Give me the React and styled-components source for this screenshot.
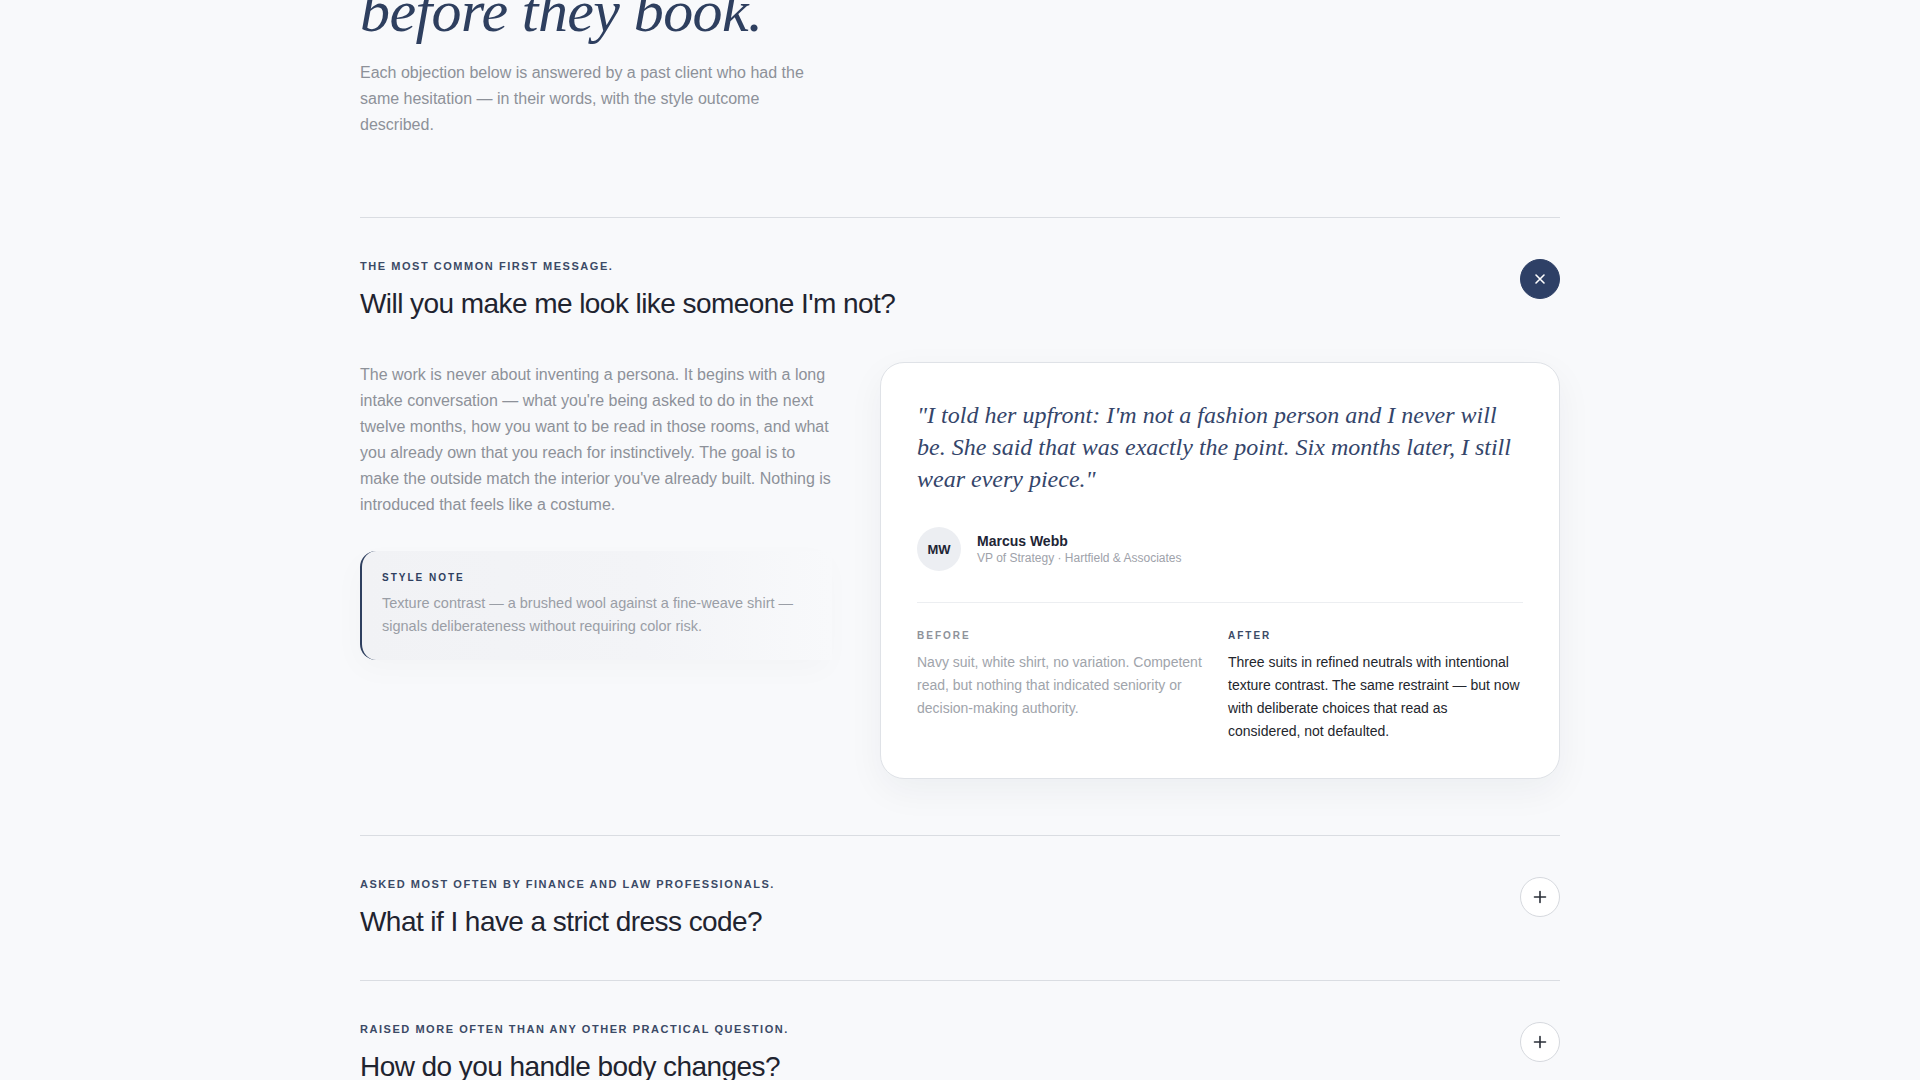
import React, { useState } from 'react'
import styled, { createGlobalStyle } from 'styled-components'

const GlobalStyle = createGlobalStyle`
  html, body {
    margin: 0;
    padding: 0;
    background: #f8f9fb;
  }
  body {
    font-family: "Liberation Sans", Arial, sans-serif;
    -webkit-font-smoothing: antialiased;
  }
`

const Page = styled.div`
  width: 1200px;
  margin: 0 auto;
  padding-bottom: 80px;
`

const Intro = styled.header`
  margin-top: -22px;
  margin-bottom: 79px;
`

const Heading = styled.h1`
  margin: 0 0 16px;
  font-family: "Liberation Serif", "Times New Roman", serif;
  font-style: italic;
  font-weight: 400;
  font-size: 60px;
  line-height: 1.1;
  letter-spacing: -0.01em;
  color: #2e3f5f;
`

const Lede = styled.p`
  margin: 0;
  max-width: 460px;
  font-size: 16px;
  line-height: 26px;
  color: #8d9199;
`

const Item = styled.section`
  border-top: 1px solid #dadde2;
  padding: 40px 0 ${({ open }) => (open ? '56px' : '40px')};
`

const ItemHead = styled.div`
  display: flex;
  align-items: flex-start;
  justify-content: space-between;
  cursor: pointer;
`

const Eyebrow = styled.div`
  font-size: 11px;
  line-height: 16px;
  font-weight: 700;
  letter-spacing: 0.14em;
  text-transform: uppercase;
  color: #3b4a66;
  margin-bottom: 12px;
`

const Question = styled.h2`
  margin: 0;
  font-size: 28px;
  line-height: 36px;
  font-weight: 400;
  letter-spacing: -0.02em;
  color: #1f2430;
`

const Toggle = styled.button`
  flex: none;
  width: 40px;
  height: 40px;
  margin-top: 1px;
  border-radius: 50%;
  display: flex;
  align-items: center;
  justify-content: center;
  padding: 0;
  cursor: pointer;
  border: 1px solid ${({ open }) => (open ? '#2e4066' : '#d6d9de')};
  background: ${({ open }) => (open ? '#2e4066' : '#ffffff')};
  color: ${({ open }) => (open ? '#ffffff' : '#2a2f38')};
`

const Body = styled.div`
  display: grid;
  grid-template-columns: 472px 1fr;
  column-gap: 48px;
  margin-top: 40px;
  align-items: start;
`

const Answer = styled.p`
  margin: 0 0 33px;
  font-size: 16px;
  line-height: 26px;
  color: #8d9199;
`

const Note = styled.aside`
  border-left: 2px solid #2e3f5f;
  border-radius: 16px 0 0 16px;
  padding: 20px 24px 22px 20px;
  background: linear-gradient(90deg, #f1f2f5 0%, #f3f4f7 60%, rgba(244, 245, 248, 0) 100%);
  box-shadow: -4px 10px 30px rgba(30, 40, 60, 0.025);
`

const NoteLabel = styled.div`
  font-size: 10px;
  line-height: 14px;
  font-weight: 700;
  letter-spacing: 0.2em;
  color: #2e3f5f;
  margin-bottom: 7px;
`

const NoteText = styled.p`
  margin: 0;
  font-size: 14.5px;
  line-height: 23px;
  color: #9a9ea6;
`

const Card = styled.div`
  background: #ffffff;
  border: 1px solid #dfe2e7;
  border-radius: 24px;
  padding: 36px 36px 35px;
  box-shadow: 0 12px 36px rgba(25, 35, 55, 0.05);
`

const Quote = styled.blockquote`
  margin: 0 0 32px;
  font-family: "Liberation Serif", "Times New Roman", serif;
  font-style: italic;
  font-size: 24px;
  line-height: 32px;
  color: #34456a;
`

const Author = styled.div`
  display: flex;
  align-items: center;
  gap: 16px;
  padding-bottom: 31px;
  border-bottom: 1px solid #eceef1;
`

const Avatar = styled.div`
  width: 44px;
  height: 44px;
  border-radius: 50%;
  background: #eceef2;
  display: flex;
  align-items: center;
  justify-content: center;
  font-size: 13px;
  font-weight: 700;
  color: #1e2535;
`

const Name = styled.div`
  font-size: 14px;
  line-height: 18px;
  font-weight: 700;
  color: #1e2535;
`

const Role = styled.div`
  font-size: 12px;
  line-height: 17px;
  color: #9ea2aa;
`

const Compare = styled.div`
  display: grid;
  grid-template-columns: 1fr 1fr;
  column-gap: 16px;
  padding-top: 26px;
`

const CompareLabel = styled.div`
  font-size: 10px;
  line-height: 14px;
  font-weight: 700;
  letter-spacing: 0.2em;
  color: ${({ after }) => (after ? '#3b4a66' : '#8e929a')};
  margin-bottom: 8px;
`

const CompareText = styled.p`
  margin: 0;
  font-size: 14px;
  line-height: 23px;
  color: ${({ after }) => (after ? '#23262d' : '#a0a4ab')};
`

const CloseIcon = () => (
  <svg width="12" height="12" viewBox="0 0 12 12" fill="none">
    <path d="M2 2l8 8M10 2l-8 8" stroke="currentColor" strokeWidth="1.6" strokeLinecap="round" />
  </svg>
)

const PlusIcon = () => (
  <svg width="14" height="14" viewBox="0 0 14 14" fill="none">
    <path d="M7 1.5v11M1.5 7h11" stroke="currentColor" strokeWidth="1.6" strokeLinecap="round" />
  </svg>
)

const objections = [
  {
    id: 'persona',
    eyebrow: 'The most common first message.',
    question: "Will you make me look like someone I'm not?",
    answer:
      "The work is never about inventing a persona. It begins with a long intake conversation — what you're being asked to do in the next twelve months, how you want to be read in those rooms, and what you already own that you reach for instinctively. The goal is to make the outside match the interior you've already built. Nothing is introduced that feels like a costume.",
    note: 'Texture contrast — a brushed wool against a fine-weave shirt — signals deliberateness without requiring color risk.',
    quote:
      "\"I told her upfront: I'm not a fashion person and I never will be. She said that was exactly the point. Six months later, I still wear every piece.\"",
    initials: 'MW',
    name: 'Marcus Webb',
    role: 'VP of Strategy · Hartfield & Associates',
    before:
      'Navy suit, white shirt, no variation. Competent read, but nothing that indicated seniority or decision-making authority.',
    after:
      'Three suits in refined neutrals with intentional texture contrast. The same restraint — but now with deliberate choices that read as considered, not defaulted.',
  },
  {
    id: 'dresscode',
    eyebrow: 'Asked most often by finance and law professionals.',
    question: 'What if I have a strict dress code?',
  },
  {
    id: 'body',
    eyebrow: 'Raised more often than any other practical question.',
    question: 'How do you handle body changes?',
  },
]

export default function App () {
  const [openId, setOpenId] = useState('persona')

  return (
    <>
      <GlobalStyle />
      <Page>
        <Intro>
          <Heading>before they book.</Heading>
          <Lede>
            Each objection below is answered by a past client who had the same
            hesitation — in their words, with the style outcome described.
          </Lede>
        </Intro>

        {objections.map(item => {
          const open = openId === item.id && !!item.answer
          return (
            <Item key={item.id} open={open}>
              <ItemHead onClick={() => setOpenId(open ? null : item.id)}>
                <div>
                  <Eyebrow>{item.eyebrow}</Eyebrow>
                  <Question>{item.question}</Question>
                </div>
                <Toggle open={open} aria-label={open ? 'Close' : 'Open'}>
                  {open ? <CloseIcon /> : <PlusIcon />}
                </Toggle>
              </ItemHead>

              {open && (
                <Body>
                  <div>
                    <Answer>{item.answer}</Answer>
                    <Note>
                      <NoteLabel>STYLE NOTE</NoteLabel>
                      <NoteText>{item.note}</NoteText>
                    </Note>
                  </div>

                  <Card>
                    <Quote>{item.quote}</Quote>
                    <Author>
                      <Avatar>{item.initials}</Avatar>
                      <div>
                        <Name>{item.name}</Name>
                        <Role>{item.role}</Role>
                      </div>
                    </Author>
                    <Compare>
                      <div>
                        <CompareLabel>BEFORE</CompareLabel>
                        <CompareText>{item.before}</CompareText>
                      </div>
                      <div>
                        <CompareLabel after>AFTER</CompareLabel>
                        <CompareText after>{item.after}</CompareText>
                      </div>
                    </Compare>
                  </Card>
                </Body>
              )}
            </Item>
          )
        })}
      </Page>
    </>
  )
}
